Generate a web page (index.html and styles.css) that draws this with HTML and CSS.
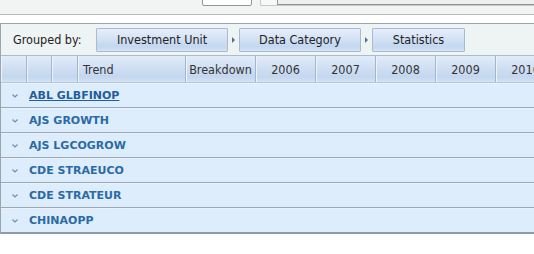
FILE: index.html
```html
<!DOCTYPE html>
<html lang="en">
<head>
	<meta charset="UTF-8">
	<title>Pivot grid</title>
	<link rel="stylesheet" href="styles.css">
</head>
<body>
	<div class="toolbar">
		<div class="tb-input"></div>
		<div class="tb-combo"><div class="tb-combo-inner"></div></div>
	</div>

	<div class="grid">
		<div class="group-panel">
			<span class="group-label">Grouped by:</span>
			<span class="group-btn gb-unit">Investment Unit</span>
			<span class="group-arrow"></span>
			<span class="group-btn gb-cat">Data Category</span>
			<span class="group-arrow"></span>
			<span class="group-btn gb-stat">Statistics</span>
		</div>

		<div class="head">
			<div class="hc w26"></div>
			<div class="hc w25"></div>
			<div class="hc w26"></div>
			<div class="hc trend">Trend</div>
			<div class="hc brk">Breakdown</div>
			<div class="hc yr">2006</div>
			<div class="hc yr">2007</div>
			<div class="hc yr">2008</div>
			<div class="hc yr">2009</div>
			<div class="hc yr">2010</div>
		</div>

		<div class="rows">
			<div class="row"><span class="chev"><svg width="6" height="4" viewBox="0 0 6 4"><path d="M0.5 0.5 L3 3 L5.5 0.5" fill="none" stroke="#6f8fb3" stroke-width="1.2"/></svg></span><a class="label current" href="#">ABL GLBFINOP</a></div>
			<div class="row"><span class="chev"><svg width="6" height="4" viewBox="0 0 6 4"><path d="M0.5 0.5 L3 3 L5.5 0.5" fill="none" stroke="#6f8fb3" stroke-width="1.2"/></svg></span><span class="label">AJS GROWTH</span></div>
			<div class="row"><span class="chev"><svg width="6" height="4" viewBox="0 0 6 4"><path d="M0.5 0.5 L3 3 L5.5 0.5" fill="none" stroke="#6f8fb3" stroke-width="1.2"/></svg></span><span class="label">AJS LGCOGROW</span></div>
			<div class="row"><span class="chev"><svg width="6" height="4" viewBox="0 0 6 4"><path d="M0.5 0.5 L3 3 L5.5 0.5" fill="none" stroke="#6f8fb3" stroke-width="1.2"/></svg></span><span class="label">CDE STRAEUCO</span></div>
			<div class="row"><span class="chev"><svg width="6" height="4" viewBox="0 0 6 4"><path d="M0.5 0.5 L3 3 L5.5 0.5" fill="none" stroke="#6f8fb3" stroke-width="1.2"/></svg></span><span class="label">CDE STRATEUR</span></div>
			<div class="row last"><span class="chev"><svg width="6" height="4" viewBox="0 0 6 4"><path d="M0.5 0.5 L3 3 L5.5 0.5" fill="none" stroke="#6f8fb3" stroke-width="1.2"/></svg></span><span class="label">CHINAOPP</span></div>
		</div>
	</div>
</body>
</html>
```

FILE: styles.css
```css
html, body {
	margin: 0;
	padding: 0;
	background: #fff;
	overflow: hidden;
}
body {
	font-family: "DejaVu Sans Condensed", "DejaVu Sans", sans-serif;
	font-size: 12.5px;
	color: #333;
	width: 534px;
}

/* top strip, mostly scrolled out of view */
.toolbar {
	height: 14px;
	background: #f2f4f4;
	border-bottom: 1px solid #b8bcbc;
	display: flex;
	align-items: flex-start;
	overflow: hidden;
}
.tb-input {
	margin: -14px 0 0 202px;
	width: 48px;
	height: 18px;
	background: #fff;
	border: 1px solid #8e9696;
	border-radius: 2px;
}
.tb-combo {
	margin: -14px 0 0 8px;
	flex: 1;
	height: 18px;
	background: #f7f8f8;
	border: 1px solid #c4c8c8;
	border-right: 0;
	border-radius: 2px 0 0 2px;
}
.tb-combo-inner {
	margin-left: 16px;
	height: 16px;
	border: 1px solid #8d9494;
	border-right: 0;
	background: #eef0f0;
}

.grid {
	margin-top: 8px;
	width: 620px;
	border-top: 1px solid #9aa6ae;
	border-left: 1px solid #9aa6ae;
}

.group-panel {
	height: 31px;
	background: #eef3f4;
	display: flex;
	align-items: center;
	padding-left: 12px;
}
.group-label {
	width: 83px;
	color: #222;
}
.group-btn {
	height: 22px;
	line-height: 22px;
	text-align: center;
	border: 1px solid #a7bbd2;
	border-radius: 1px;
	background: linear-gradient(#e6eefa, #d3e2f5 45%, #c3d7ef 80%, #d6e4f6);
	color: #222;
}
.gb-unit { width: 130px; }
.gb-cat { width: 120px; }
.gb-stat { width: 91px; }
.group-arrow {
	width: 11px;
	display: flex;
	justify-content: center;
}
.group-arrow::before {
	content: "";
	border-left: 3px solid #56708e;
	border-top: 3px solid transparent;
	border-bottom: 3px solid transparent;
}

.head {
	display: flex;
	height: 26px;
	border-top: 1px solid #a9bbcf;
	border-bottom: 1px solid #b7c8db;
}
.hc {
	box-sizing: border-box;
	border-right: 1px solid #a2b6cc;
	box-shadow: inset 1px 0 0 #eef4fc;
	background: linear-gradient(#e2ecf9, #d2e1f4 40%, #c4d7ef 80%, #d3e2f4);
	line-height: 26px;
	padding-top: 1px;
	color: #333;
}
.w26 { width: 26px; }
.w25 { width: 25px; }
.trend { width: 108px; padding-left: 5px; }
.brk { width: 70px; text-align: center; }
.yr { width: 60px; text-align: center; }

.row {
	height: 24px;
	background: #deedfc;
	border-bottom: 1px solid #9aa9b4;
	box-shadow: inset 0 1px 0 #eaf3fd;
	display: flex;
	align-items: center;
}
.row.last {
	border-bottom: 2px solid #8f9ba4;
}
.chev {
	width: 28px;
	display: flex;
	justify-content: center;
	padding-top: 1px;
}
.chev svg { display: block; }
.label {
	font-family: "DejaVu Sans", sans-serif;
	font-weight: bold;
	font-size: 11px;
	color: #2b6aa5;
	text-decoration: none;
}
.label.current {
	text-decoration: underline;
	color: #1f5d9c;
}
```
